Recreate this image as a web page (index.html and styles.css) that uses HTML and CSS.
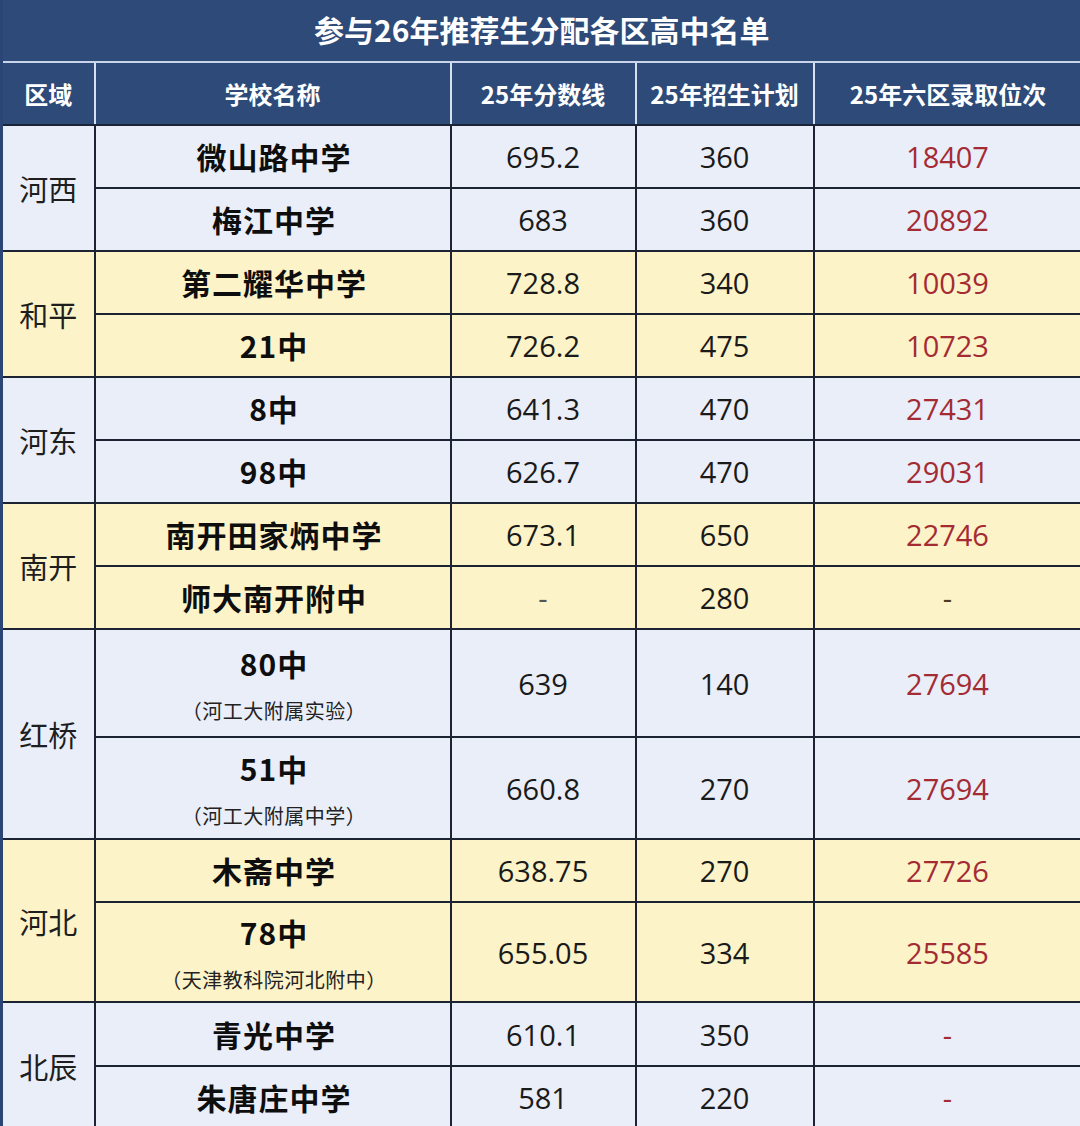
FILE: index.html
```html
<!DOCTYPE html>
<html lang="zh-CN">
<head>
<meta charset="utf-8">
<title>参与26年推荐生分配各区高中名单</title>
<link rel="stylesheet" href="styles.css">
</head>
<body>
<table class="sheet">
  <colgroup>
    <col class="c-region"><col class="c-school"><col class="c-score"><col class="c-plan"><col class="c-rank">
  </colgroup>
  <thead>
    <tr class="r-title"><th colspan="5" class="title">参与26年推荐生分配各区高中名单</th></tr>
    <tr class="r-head">
      <th class="h first">区域</th>
      <th class="h">学校名称</th>
      <th class="h">25年分数线</th>
      <th class="h">25年招生计划</th>
      <th class="h">25年六区录取位次</th>
    </tr>
  </thead>
  <tbody>
    <tr class="blue r63"><td rowspan="2" class="region">河西</td><td class="school">微山路中学</td><td class="num">695.2</td><td class="num">360</td><td class="num red">18407</td></tr>
    <tr class="blue r63"><td class="school">梅江中学</td><td class="num">683</td><td class="num">360</td><td class="num red">20892</td></tr>

    <tr class="yellow r63"><td rowspan="2" class="region">和平</td><td class="school">第二耀华中学</td><td class="num">728.8</td><td class="num">340</td><td class="num red">10039</td></tr>
    <tr class="yellow r63"><td class="school">21中</td><td class="num">726.2</td><td class="num">475</td><td class="num red">10723</td></tr>

    <tr class="blue r63"><td rowspan="2" class="region">河东</td><td class="school">8中</td><td class="num">641.3</td><td class="num">470</td><td class="num red">27431</td></tr>
    <tr class="blue r63"><td class="school">98中</td><td class="num">626.7</td><td class="num">470</td><td class="num red">29031</td></tr>

    <tr class="yellow r63"><td rowspan="2" class="region">南开</td><td class="school">南开田家炳中学</td><td class="num">673.1</td><td class="num">650</td><td class="num red">22746</td></tr>
    <tr class="yellow r63"><td class="school">师大南开附中</td><td class="num dash">-</td><td class="num">280</td><td class="num dash dark">-</td></tr>

    <tr class="blue r108"><td rowspan="2" class="region">红桥</td><td class="school"><div>80中</div><div class="sub">（河工大附属实验）</div></td><td class="num">639</td><td class="num">140</td><td class="num red">27694</td></tr>
    <tr class="blue r102"><td class="school"><div>51中</div><div class="sub">（河工大附属中学）</div></td><td class="num">660.8</td><td class="num">270</td><td class="num red">27694</td></tr>

    <tr class="yellow r63"><td rowspan="2" class="region">河北</td><td class="school">木斋中学</td><td class="num">638.75</td><td class="num">270</td><td class="num red">27726</td></tr>
    <tr class="yellow r100"><td class="school"><div>78中</div><div class="sub">（天津教科院河北附中）</div></td><td class="num">655.05</td><td class="num">334</td><td class="num red">25585</td></tr>

    <tr class="blue r64"><td rowspan="2" class="region">北辰</td><td class="school">青光中学</td><td class="num">610.1</td><td class="num">350</td><td class="num red">-</td></tr>
    <tr class="blue r63"><td class="school">朱唐庄中学</td><td class="num">581</td><td class="num">220</td><td class="num red">-</td></tr>
  </tbody>
</table>
</body>
</html>
```

FILE: styles.css
```css
html, body {
  margin: 0;
  padding: 0;
  background: #e9eef9;
}

.sheet {
  width: 1080px;
  border-collapse: collapse;
  table-layout: fixed;
  border-left: 3px solid #2b4674;
  font-family: "Noto Sans CJK SC", "Noto Sans", sans-serif;
}

.c-region { width: 93px; }
.c-school { width: 356px; }
.c-score { width: 185px; }
.c-plan { width: 178px; }
.c-rank { width: 268px; }

.r-title { height: 62px; }
.r-head { height: 63px; }

.title {
  background: #2d4a78;
  color: #ffffff;
  font-size: 30px;
  font-weight: 700;
  text-align: center;
  padding: 0 0 4px 0;
  border-bottom: 2px solid #c9d5ea;
  border-right: 2px solid #2b4674;
}

.h {
  background: #2d4a78;
  color: #ffffff;
  font-size: 24px;
  font-weight: 700;
  text-align: center;
  padding: 0;
  border-left: 2px solid #d7e0ef;
  border-bottom: 2px solid #1b2336;
}

.h.first { border-left: 3px solid #2b4674; }

td {
  border: 2px solid #1c2333;
  text-align: center;
  vertical-align: middle;
  padding: 0;
  color: #141414;
}

.blue td { background: #e9eef9; }
.yellow td { background: #fcf3c8; }

.r63 { height: 63px; }
.r64 { height: 64px; }
.r100 { height: 100px; }
.r102 { height: 102px; }
.r108 { height: 108px; }

.region {
  font-size: 29px;
  font-weight: 400;
  color: #1e1e1e;
}

.school {
  font-size: 30px;
  font-weight: 700;
  letter-spacing: 1px;
  padding-left: 3px;
  color: #0e0e0e;
  line-height: 1.3;
}

.school .sub {
  font-size: 20px;
  font-weight: 400;
  letter-spacing: 0.5px;
  line-height: 1.2;
  margin-top: 16px;
  color: #222;
}

.num {
  font-family: "Open Sans", "Noto Sans", sans-serif;
  font-size: 29px;
  font-weight: 400;
  color: #1a1a1a;
}

.red { color: #a42b33; }
.dash { color: #555; }
.dash.dark { color: #4a3a20; }
```
